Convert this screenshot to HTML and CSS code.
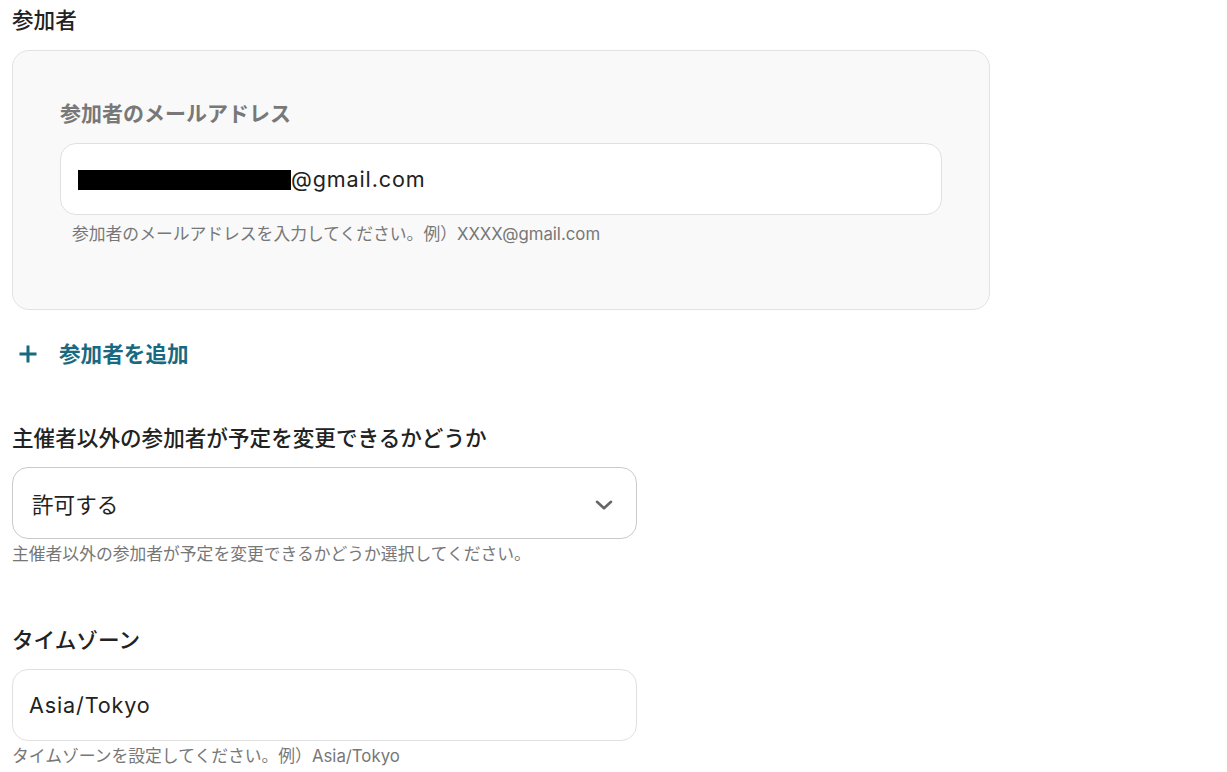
FILE: index.html
```html
<!DOCTYPE html>
<html lang="ja">
<head>
<meta charset="utf-8">
<link rel="stylesheet" href="styles.css">
</head>
<body>
<div class="page">
  <div class="section-title">参加者</div>
  <div class="card">
    <div class="card-label">参加者のメールアドレス</div>
    <div class="input input-wide latin"><span class="redact"></span>@gmail.com</div>
    <div class="help help-indent">参加者のメールアドレスを入力してください。例）XXXX@gmail.com</div>
  </div>
  <div class="add-row">
    <svg class="plus" width="20" height="20" viewBox="0 0 20 20"><path d="M10 1.5v17M1.5 10h17" stroke="currentColor" stroke-width="3" fill="none"/></svg>
    <span>参加者を追加</span>
  </div>

  <div class="field field-first">
    <div class="field-label">主催者以外の参加者が予定を変更できるかどうか</div>
    <div class="input select">
      <span>許可する</span>
      <svg class="chev" width="18" height="10" viewBox="0 0 18 10"><path d="M2 1.8l7 6.4 7-6.4" stroke="#666" stroke-width="2.6" fill="none" stroke-linecap="round" stroke-linejoin="round"/></svg>
    </div>
    <div class="help help-select">主催者以外の参加者が予定を変更できるかどうか選択してください。</div>
  </div>

  <div class="field field-second">
    <div class="field-label">タイムゾーン</div>
    <div class="input input-tz latin">Asia/Tokyo</div>
    <div class="help help-select">タイムゾーンを設定してください。例）Asia/Tokyo</div>
  </div>
</div>
</body>
</html>
```

FILE: styles.css
```css
* { box-sizing: border-box; }
html, body { margin: 0; padding: 0; background: #fff; }
body {
  font-family: "Inter", "Noto Sans CJK JP", "Noto Sans", sans-serif;
  color: #222;
}
.page {
  padding: 5px 0 0 12px;
  width: 990px;
}
.section-title {
  font-size: 21.6px;
  line-height: 30px;
  font-weight: 500;
  color: #222;
}
.card {
  margin-top: 15px;
  background: #f9f9f9;
  border: 1px solid #e2e2e2;
  border-radius: 17px;
  padding: 48px 47px 63px 47px;
  width: 978px;
}
.card-label {
  font-size: 21px;
  line-height: 30px;
  font-weight: 700;
  color: #787878;
}
.input {
  background: #fff;
  border: 1px solid #e0e0e0;
  border-radius: 16px;
  height: 72px;
  display: flex;
  align-items: center;
  padding: 0 16px;
  font-size: 21.6px;
  color: #222;
  width: 625px;
}
.latin { letter-spacing: 0.85px; }
.input-wide {
  width: 882px;
  margin-top: 14px;
  padding-left: 17px;
}
.redact {
  display: inline-block;
  flex: none;
  width: 213px;
  height: 20px;
  background: #000;
  margin-top: 1px;
}
.help {
  font-size: 16.8px;
  line-height: 24px;
  color: #777;
}
.help-indent { padding-left: 12px; margin-top: 7px; }
.help-select { margin-top: 3px; }
.add-row {
  display: flex;
  align-items: center;
  gap: 21px;
  color: #19697f;
  font-weight: 700;
  font-size: 21.6px;
  margin-top: 29px;
  padding-left: 6px;
  line-height: 30px;
}
.plus { flex: none; }
.field-first { margin-top: 54px; }
.field-second { margin-top: 59px; }
.field-label {
  font-size: 21.6px;
  line-height: 30px;
  font-weight: 500;
  color: #222;
  margin-bottom: 14px;
}
.select {
  justify-content: space-between;
  padding-left: 19px;
  padding-right: 23px;
  border-color: #cacaca;
}
.input-tz { border-color: #e0e0e0; }
.chev { flex: none; margin-top: 4px; }
```
